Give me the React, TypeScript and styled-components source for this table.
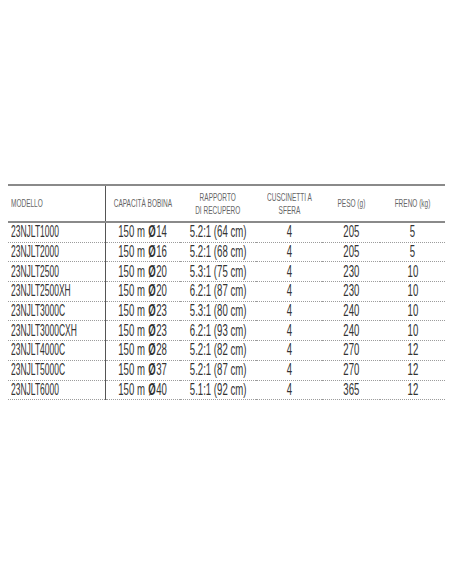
import React from 'react'
import styled, { createGlobalStyle } from 'styled-components'

const GlobalStyle = createGlobalStyle`
  html, body {
    margin: 0;
    padding: 0;
    background: #ffffff;
  }
  body {
    font-family: "Liberation Sans", Arial, sans-serif;
  }
`

const Page = styled.div`
  width: 452px;
  height: 584px;
  padding: 184px 7px 0 8px;
  box-sizing: border-box;
  background: #ffffff;
`

const Table = styled.table`
  width: 437px;
  border-collapse: collapse;
  table-layout: fixed;
  border-top: 2px solid #8a8a8a;
`

const Th = styled.th<{ $first?: boolean }>`
  height: 35px;
  padding: 0;
  border-bottom: 2px solid #8a8a8a;
  border-right: ${(p) => (p.$first ? '1px solid #555' : 'none')};
  font-weight: normal;
  font-size: 10px;
  line-height: 13px;
  color: #666;
`

const Td = styled.td<{ $first?: boolean }>`
  height: 18.7px;
  padding: 0;
  border-bottom: 1px dotted #9c9c9c;
  border-right: ${(p) => (p.$first ? '1px solid #555' : 'none')};
  font-size: 16px;
  line-height: 18px;
  color: #333;
`

const Cell = styled.div<{ $left?: boolean }>`
  display: flex;
  align-items: center;
  justify-content: ${(p) => (p.$left ? 'flex-start' : 'center')};
  padding-left: ${(p) => (p.$left ? '3px' : '0')};
  white-space: nowrap;
`

const Narrow = styled.span<{ $left?: boolean; $scale: number }>`
  display: inline-block;
  flex-shrink: 0;
  text-align: center;
  transform: scaleX(${(p) => p.$scale});
  transform-origin: ${(p) => (p.$left ? 'left center' : 'center center')};
`

const Dia = styled.span`
  font-weight: 700;
  margin: 0 1px;
`

type Row = {
  model: string
  dia: string
  ratio: string
  bearings: string
  weight: string
  drag: string
}

const rows: Row[] = [
  { model: '23NJLT1000', dia: '14', ratio: '5.2:1 (64 cm)', bearings: '4', weight: '205', drag: '5' },
  { model: '23NJLT2000', dia: '16', ratio: '5.2:1 (68 cm)', bearings: '4', weight: '205', drag: '5' },
  { model: '23NJLT2500', dia: '20', ratio: '5.3:1 (75 cm)', bearings: '4', weight: '230', drag: '10' },
  { model: '23NJLT2500XH', dia: '20', ratio: '6.2:1 (87 cm)', bearings: '4', weight: '230', drag: '10' },
  { model: '23NJLT3000C', dia: '23', ratio: '5.3:1 (80 cm)', bearings: '4', weight: '240', drag: '10' },
  { model: '23NJLT3000CXH', dia: '23', ratio: '6.2:1 (93 cm)', bearings: '4', weight: '240', drag: '10' },
  { model: '23NJLT4000C', dia: '28', ratio: '5.2:1 (82 cm)', bearings: '4', weight: '270', drag: '12' },
  { model: '23NJLT5000C', dia: '37', ratio: '5.2:1 (87 cm)', bearings: '4', weight: '270', drag: '12' },
  { model: '23NJLT6000', dia: '40', ratio: '5.1:1 (92 cm)', bearings: '4', weight: '365', drag: '12' },
]

// condensed look: the type is squeezed horizontally
const HEAD = 0.65
const BODY = 0.6
const MODEL = 0.53

const App = () => {
  return (
    <Page>
      <GlobalStyle />
      <Table>
        <colgroup>
          <col style={{ width: 97 }} />
          <col style={{ width: 75 }} />
          <col style={{ width: 76 }} />
          <col style={{ width: 66 }} />
          <col style={{ width: 58 }} />
          <col style={{ width: 65 }} />
        </colgroup>
        <thead>
          <tr>
            <Th $first>
              <Cell $left>
                <Narrow $left $scale={HEAD}>MODELLO</Narrow>
              </Cell>
            </Th>
            <Th>
              <Cell>
                <Narrow $scale={HEAD}>CAPACITÀ BOBINA</Narrow>
              </Cell>
            </Th>
            <Th>
              <Cell>
                <Narrow $scale={HEAD}>
                  RAPPORTO
                  <br />
                  DI RECUPERO
                </Narrow>
              </Cell>
            </Th>
            <Th>
              <Cell>
                <Narrow $scale={HEAD}>
                  CUSCINETTI A
                  <br />
                  SFERA
                </Narrow>
              </Cell>
            </Th>
            <Th>
              <Cell>
                <Narrow $scale={HEAD}>PESO (g)</Narrow>
              </Cell>
            </Th>
            <Th>
              <Cell>
                <Narrow $scale={HEAD}>FRENO (kg)</Narrow>
              </Cell>
            </Th>
          </tr>
        </thead>
        <tbody>
          {rows.map((r) => (
            <tr key={r.model}>
              <Td $first>
                <Cell $left>
                  <Narrow $left $scale={MODEL}>{r.model}</Narrow>
                </Cell>
              </Td>
              <Td>
                <Cell>
                  <Narrow $scale={BODY}>
                    150 m <Dia>Ø</Dia>{r.dia}
                  </Narrow>
                </Cell>
              </Td>
              <Td>
                <Cell>
                  <Narrow $scale={BODY}>{r.ratio}</Narrow>
                </Cell>
              </Td>
              <Td>
                <Cell>
                  <Narrow $scale={BODY}>{r.bearings}</Narrow>
                </Cell>
              </Td>
              <Td>
                <Cell>
                  <Narrow $scale={BODY}>{r.weight}</Narrow>
                </Cell>
              </Td>
              <Td>
                <Cell>
                  <Narrow $scale={BODY}>{r.drag}</Narrow>
                </Cell>
              </Td>
            </tr>
          ))}
        </tbody>
      </Table>
    </Page>
  )
}

export default App
